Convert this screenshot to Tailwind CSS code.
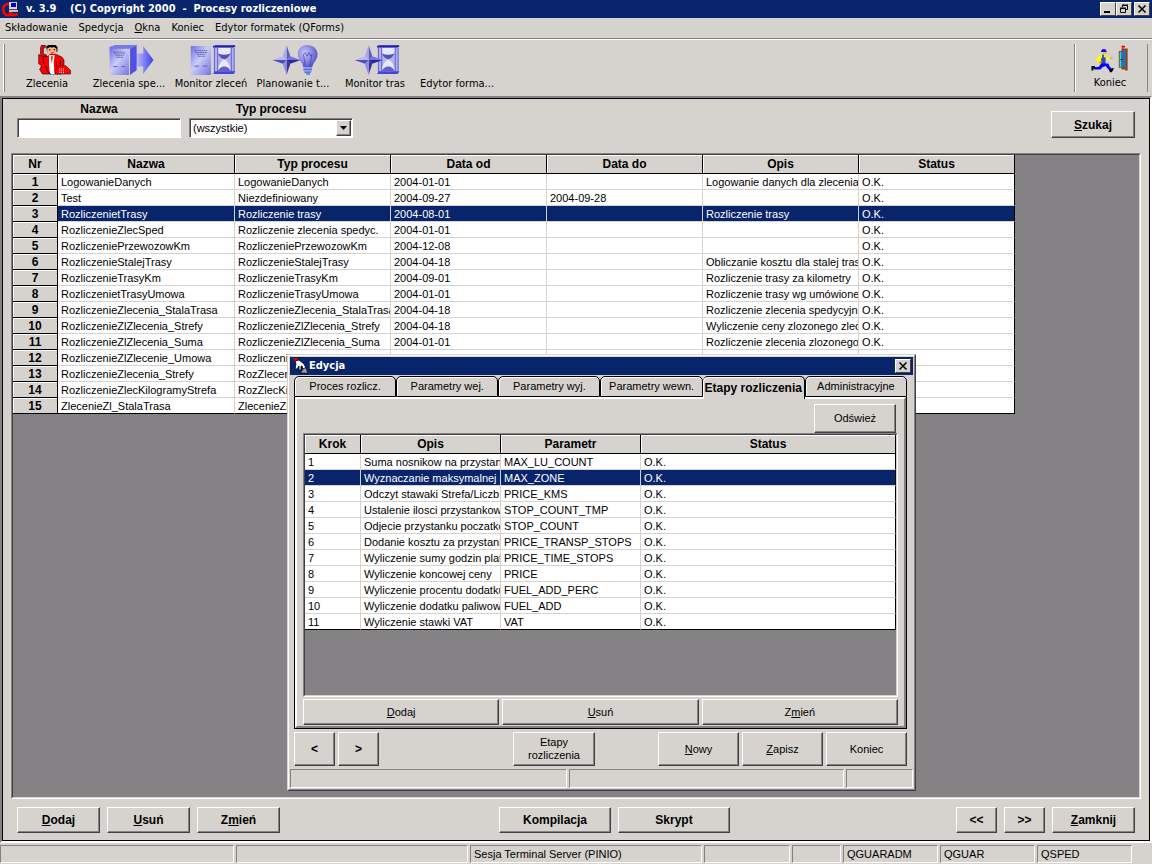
<!DOCTYPE html>
<html lang="pl">
<head>
<meta charset="utf-8">
<title>Procesy rozliczeniowe</title>
<script src="https://cdn.jsdelivr.net/npm/@tailwindcss/browser@4"></script>
</head>
<body class="relative flex min-h-screen flex-col overflow-hidden bg-[#d6d3ce] font-['Liberation_Sans',Arial,sans-serif] text-[11px] text-black">

<!-- shared drawings -->
<svg class="absolute h-0 w-0" aria-hidden="true">
  <defs>
    <linearGradient id="sheet" x1="0" y1="0" x2="1" y2="1"><stop offset="0" stop-color="#6c6ce0"/><stop offset=".45" stop-color="#ccccf8"/><stop offset="1" stop-color="#7474dc"/></linearGradient>
    <linearGradient id="arrow" x1="0" y1="0" x2="1" y2="0"><stop offset="0" stop-color="#c8c8fa"/><stop offset="1" stop-color="#3c3ce8"/></linearGradient>
    <radialGradient id="glass" cx=".35" cy=".35" r=".75"><stop offset="0" stop-color="#c8c8f8"/><stop offset=".6" stop-color="#7c7ce0"/><stop offset="1" stop-color="#4a4ab8"/></radialGradient>
    <symbol id="star" viewBox="0 0 30 32">
      <path d="M15 0l4 12-4 4z" fill="#5a5ac0"/><path d="M15 0l-4 12 4 4z" fill="#a8a8ee"/>
      <path d="M30 16l-11-4-4 4z" fill="#7474e0"/><path d="M30 16l-11 4-4-4z" fill="#28289c"/>
      <path d="M15 32l4-12-4-4z" fill="#34349c"/><path d="M15 32l-4-12 4-4z" fill="#8c8ce4"/>
      <path d="M0 16l11-4 4 4z" fill="#b8b8f4"/><path d="M0 16l11 4 4-4z" fill="#4c4cc4"/>
    </symbol>
    <symbol id="hourglass" viewBox="0 0 24 32">
      <path d="M1 3h22v26H1z" fill="#b4b4e4"/>
      <path d="M5 3h14c0 7-3 11-6 13 3 2 6 6 6 13H5c0-7 3-11 6-13-3-2-6-6-6-13z" fill="#e8e8fc"/>
      <path d="M5.500 9q6 3 13 0c-1 3-4 6-6.500 6.500C9 15 6.500 12 5.500 9z" fill="#5050bc"/>
      <path d="M12 23c4 0 6 3 7 5H5c1-2 3-5 7-5z" fill="#6060c8"/>
      <path d="M1.500 3v26M22.500 3v26M5 3v26M19.500 3v26" stroke="#5858e8" fill="none"/>
      <path d="M0 1l3-1h21l-2 3H0zM0 31h22l2-3H2z" fill="#4444d8"/><path d="M0 1.500h24" stroke="#20207c" fill="none"/>
    </symbol>
    <symbol id="sheetpage" viewBox="0 0 22 32">
      <path d="M0 1h22v31H0z" fill="url(#sheet)"/>
      <path d="M4 6h14M5 8h13M7 10h9M8 12h7" stroke="#5858b4" stroke-dasharray="2 .6" fill="none"/><path d="M4 22.500h5M13 22.500h5" stroke="#5858b4" fill="none"/>
    </symbol>
  </defs>
</svg>

<header class="flex h-[18px] items-center bg-[#08246b] px-[2px] font-['DejaVu_Sans_Condensed','DejaVu_Sans',sans-serif] text-white">
  <svg class="h-4 w-4" viewBox="0 0 16 16" aria-hidden="true">
    <path d="M7 3H5L2 5 1 8l1 4 2 2h9l3-1M7 11l5 3" fill="none" stroke="#f00" stroke-width="2.600"/>
    <path d="M7 1h8v7H7z" fill="#d6d3ce"/><path d="M9 2h5v4H9z" fill="#0000d0"/><path d="M7 9h9v2H7z" fill="#c0c0c0"/><path d="M7 8h8v1H7z" fill="#555"/>
  </svg>
  <h1 class="ml-2 flex-1 whitespace-pre text-[11px] leading-[18px] font-bold">v. 3.9    (C) Copyright 2000  -  Procesy rozliczeniowe</h1>
  <div class="flex">
    <button aria-label="Minimalizuj" class="flex h-[14px] w-4 items-center justify-center border border-white border-r-[#424142] border-b-[#424142] bg-[#d6d3ce]"><svg class="h-[10px] w-3" viewBox="0 0 12 10"><path d="M2 7h6v2H2z"/></svg></button>
    <button aria-label="Przywróć" class="mr-[2px] flex h-[14px] w-4 items-center justify-center border border-white border-r-[#424142] border-b-[#424142] bg-[#d6d3ce]"><svg class="h-[10px] w-3" viewBox="0 0 12 10"><path d="M4.500 3V1.500h5v4H8M4 1h6M2.500 4.500h5v4h-5zM2 4h6" fill="none" stroke="#000"/></svg></button>
    <button aria-label="Zamknij" class="flex h-[14px] w-4 items-center justify-center border border-white border-r-[#424142] border-b-[#424142] bg-[#d6d3ce]"><svg class="h-[10px] w-3" viewBox="0 0 12 10"><path d="M2.500 1.500l7 7M9.500 1.500l-7 7" stroke="#000" stroke-width="1.600"/></svg></button>
  </div>
</header>

<nav class="flex h-5 items-center gap-[11px] px-[5px] pt-px font-['DejaVu_Sans_Condensed','DejaVu_Sans',sans-serif] text-[11px]">
  <button>Składowanie</button><button>Spedycja</button><button><u>O</u>kna</button><button>Koniec</button><button>Edytor formatek (QForms)</button>
</nav>

<div role="toolbar" class="flex h-[58px] items-stretch border-t border-[#848284] pb-[3px] font-['DejaVu_Sans_Condensed','DejaVu_Sans',sans-serif] shadow-[inset_0_1px_0_#fff]">
  <span class="mt-[5px] mr-px ml-[3px] h-12 w-[2px] border-l border-white bg-[#848284]"></span>
  <div class="flex flex-1 [&_button]:flex [&_button]:w-[82px] [&_button]:flex-col [&_button]:items-center [&_button]:pt-[6px] [&_span]:leading-[18px] [&_span]:whitespace-nowrap [&_svg]:ml-1">
    <button>
      <svg class="h-8 w-12" viewBox="-12 0 48 32" aria-hidden="true">
        <path d="M9 1l3-1h7l2 2v5l-2 1h-9z"/><path d="M10 4l3-2 2 1 2-1 3 2v4l-3 3h-4l-3-3z" fill="#ffb088"/><path d="M12 4.500h1.500v1H12zM17 4.500h1.500v1H17z"/><path d="M14 8h3v1h-3z" fill="#f00"/>
        <path d="M4 0h4v3H6v7h3v3H5l-2-3V3z" fill="#f00" stroke="#000" stroke-width=".6"/>
        <path d="M1 10l4 2h6l2-2h7l6 3 2 3v6l-3 9H5L2 26l2-4-3-2z" fill="#f00" stroke="#000" stroke-width=".6"/>
        <path d="M12 11h6l-1 8 1 12h-5l-1-10z" fill="#fff"/><path d="M14 12h2l-1 8z" fill="#f00"/>
        <path d="M6 13v6l3 5 1 4 4 3M20 18v5M24 16v5" stroke="#000" stroke-width=".8" fill="none"/>
        <path d="M18 27l5-5h7l5 5v4H19z" fill="#f00" stroke="#000" stroke-width=".5"/><path d="M23 25.500h6M23 27.500h6M23 29.500h6" stroke="#fff" stroke-dasharray="1 1"/>
      </svg><span>Zlecenia</span></button>
    <button>
      <svg class="h-8 w-12" viewBox="0 0 48 32" aria-hidden="true">
        <path d="M28 9h9V1l11 15-11 15V23h-9z" fill="url(#arrow)"/><path d="M23 4l7-4v27l-7 5z" fill="#5050e8"/>
        <use href="#sheetpage" x="0" y="2" width="23" height="30"/><path d="M1 2l6-2h23l-6 4H1z" fill="#7878e4"/>
      </svg><span>Zlecenia spe...</span></button>
    <button>
      <svg class="h-8 w-12" viewBox="0 0 48 32" aria-hidden="true"><use href="#sheetpage" width="22" height="32"/><use href="#hourglass" x="24" width="24" height="32"/></svg>
      <span>Monitor zleceń</span></button>
    <button>
      <svg class="h-8 w-12" viewBox="0 0 48 32" aria-hidden="true"><use href="#star" width="30" height="32"/>
        <path d="M37 0c6 0 11 4 11 10 0 5-4 8-6 14h-9c-1-6-6-9-6-14C27 4 31 0 37 0z" fill="url(#glass)"/>
        <path d="M35 22l-2-12 2-2 2 4 2-4 2 4 1-2-2 12" fill="none" stroke="#4848a8" stroke-width=".8"/><path d="M33 24h9v4l-3 3h-3l-3-3z" fill="#9c9cf4"/><path d="M33 26h9M34 29h7" stroke="#5858c8"/><path d="M36 30h4v2h-4z" fill="#38a0ff"/>
      </svg><span>Planowanie t...</span></button>
    <button>
      <svg class="h-8 w-12" viewBox="0 0 48 32" aria-hidden="true"><use href="#hourglass" x="24" width="24" height="32"/><use href="#star" width="30" height="32"/></svg>
      <span>Monitor tras</span></button>
    <button><i class="block h-8"></i><span>Edytor forma...</span></button>
  </div>
  <div class="mt-[5px] mr-1 flex h-12 w-[74px] justify-center border-x border-[#848284] shadow-[inset_1px_0_0_#fff]">
    <button class="flex flex-col items-center pr-[2px]">
      <svg class="h-[34px] w-[42px]" viewBox="0 0 42 34" aria-hidden="true">
        <path d="M11 7h1V6h4v1h1v2h-6z" fill="#00f"/><path d="M13 9h4v3h-4z" fill="#ffb060"/>
        <path d="M9 12h7v3h6v2h-6v3h-5v3H8v-2H6v-5h1v-2h2z" fill="#ff0"/><path d="M21 15h3v2h-3z" fill="#f0a060"/>
        <path d="M12 12h2v3h2v8h-5v-7h1z" fill="#2848c8"/><path d="M9 20h3v2H9z" fill="#c08050"/>
        <path d="M11 22h8l2 4 3 3-3 2-5-6-3 1-3 3H3v-3h5z" fill="#00f"/><path d="M0 25h4v3H2v2H0zM20 29l5-2v2l-2 3h-2z"/>
        <path d="M31 8h3V5h7v25h-3v-1h-4v-2h-3z" fill="#8c4410"/><path d="M32 9h2v17h-2z" fill="#00e8f0"/><path d="M34 8l5-2v22l-5-3z" fill="#3468b0"/><path d="M34 4V2h4v2h-2v2h-1V4z" fill="#f00"/><path d="M33 17h2v1h-2z"/>
      </svg><span class="leading-[18px]">Koniec</span></button>
  </div>
</div>

<main class="flex flex-1 flex-col border-2 border-[#848284] border-r-white border-b-white">
  <div class="flex flex-1 flex-col border border-black px-2 pt-[3px]">
    <form class="mb-[15px] flex items-end gap-2 pr-[6px] pl-[6px]">
      <div class="flex w-[164px] flex-col gap-[2px]">
        <label for="nazwa" class="text-center text-[12px] leading-[14px] font-bold">Nazwa</label>
        <input id="nazwa" type="text" class="h-5 w-full border border-[#848284] border-r-white border-b-white bg-white px-1 shadow-[inset_1px_1px_0_#424142] outline-none">
      </div>
      <div class="flex w-[164px] flex-col gap-[2px]">
        <label for="typ" class="text-center text-[12px] leading-[14px] font-bold">Typ procesu</label>
        <div class="relative">
          <select id="typ" class="block h-5 w-full appearance-none border border-[#848284] border-r-white border-b-white bg-white pl-[3px] text-[11px] shadow-[inset_1px_1px_0_#424142] outline-none"><option>(wszystkie)</option></select>
          <span class="pointer-events-none absolute top-[2px] right-[2px] flex h-4 w-[15px] items-center justify-center border border-white border-r-[#424142] border-b-[#424142] bg-[#d6d3ce] shadow-[inset_-1px_-1px_0_#848284]"><svg class="h-1 w-[7px]" viewBox="0 0 7 4" aria-hidden="true"><path d="M0 0h7L3.500 4z"/></svg></span>
        </div>
      </div>
      <button type="button" class="ml-auto h-[27px] w-[84px] border border-white border-r-[#424142] border-b-[#424142] text-[12px] font-bold shadow-[inset_-1px_-1px_0_#848284]"><u>S</u>zukaj</button>
    </form>

    <div class="flex flex-1 flex-col border border-[#848284] border-r-white border-b-white">
      <div class="flex-1 border border-[#424142] border-r-[#d6d3ce] border-b-[#d6d3ce] bg-[#848284]">
        <table class="w-[1002px] table-fixed border-separate border-spacing-0 bg-white [&_td]:overflow-hidden [&_td]:border-r [&_td]:border-b [&_td]:border-[#d6d3ce] [&_td]:pt-px [&_td]:pl-[3px] [&_td]:leading-[14px] [&_td]:whitespace-nowrap [&_td:last-child]:border-r-black [&_th]:border-r [&_th]:border-b [&_th]:border-black [&_th]:bg-[#d6d3ce] [&_th]:px-0 [&_th]:pt-px [&_th]:text-[12px] [&_th]:font-bold [&_th]:shadow-[inset_1px_1px_0_#fff] [&_tbody_th]:leading-[14px] [&_thead_th]:leading-[17px] [&_tbody_tr:last-child_td]:border-b-black">
          <colgroup><col class="w-[45px]"><col class="w-[177px]"><col class="w-[156px]"><col class="w-[156px]"><col class="w-[156px]"><col class="w-[156px]"><col class="w-[156px]"></colgroup>
          <thead><tr><th>Nr</th><th>Nazwa</th><th>Typ procesu</th><th>Data od</th><th>Data do</th><th>Opis</th><th>Status</th></tr></thead>
          <tbody id="procesy"></tbody>
        </table>
      </div>
    </div>

    <div class="flex justify-between px-[6px] pt-2 pb-[7px] [&_button]:h-[26px] [&_button]:border [&_button]:border-white [&_button]:border-r-[#424142] [&_button]:border-b-[#424142] [&_button]:text-[12px] [&_button]:font-bold [&_button]:shadow-[inset_-1px_-1px_0_#848284]">
      <div class="flex gap-[7px]"><button class="w-[83px]"><u>D</u>odaj</button><button class="w-[83px]"><u>U</u>suń</button><button class="w-[83px]">Z<u>m</u>ień</button></div>
      <div class="mr-[7px] flex gap-[7px]"><button class="w-[112px]">Kompilacja</button><button class="w-[112px]">Skrypt</button></div>
      <div class="flex gap-[7px]"><button class="w-[41px]">&lt;&lt;</button><button class="w-[41px]">&gt;&gt;</button><button class="w-[83px]"><u>Z</u>amknij</button></div>
    </div>
  </div>
</main>

<footer class="grid h-[21px] grid-cols-[234fr_232fr_232fr_86fr_49fr_95fr_95fr_95fr] gap-[2px] pt-[2px] pr-5 pb-px [&_span]:overflow-hidden [&_span]:border [&_span]:border-[#848284] [&_span]:border-r-white [&_span]:border-b-white [&_span]:pl-[3px] [&_span]:leading-[17px] [&_span]:whitespace-nowrap">
  <span></span><span></span><span>Sesja Terminal Server (PINIO)</span><span></span><span></span><span>QGUARADM</span><span>QGUAR</span><span>QSPED</span>
</footer>

<!-- edit window -->
<section role="dialog" aria-labelledby="edycja" class="absolute top-[354px] left-[287px] w-[629px] border border-[#d6d3ce] border-r-[#424142] border-b-[#424142] bg-[#d6d3ce]">
  <div class="border border-white border-r-[#848284] border-b-[#848284] p-px">
    <div class="flex h-[18px] items-center bg-[#08246b] pr-[2px] pl-[3px] text-white">
      <svg class="h-4 w-4" viewBox="0 0 16 16" aria-hidden="true"><path d="M0 0h5v3H1z" fill="#c00"/><path d="M2 3l4-1 5 4 2 4-3 1-1-3-1 0v4H6V8L4 11H2l1-5z" fill="#fff" stroke="#000" stroke-width=".8"/><path d="M8 15c0-2 2-3 3-5h2l1 3 1 2z" fill="#a0a0a0" stroke="#000" stroke-width=".6"/></svg>
      <h2 id="edycja" class="flex-1 font-['DejaVu_Sans_Condensed','DejaVu_Sans',sans-serif] text-[11px] font-bold">Edycja</h2>
      <button aria-label="Zamknij okno" class="flex h-[14px] w-4 items-center justify-center border border-white border-r-[#424142] border-b-[#424142] bg-[#d6d3ce]"><svg class="h-[10px] w-3" viewBox="0 0 12 10"><path d="M2.500 1.500l7 7M9.500 1.500l-7 7" stroke="#000" stroke-width="1.600"/></svg></button>
    </div>

    <div class="pt-px pr-[6px] pl-1">
      <div role="tablist" class="grid h-[21px] grid-cols-6 [&_button]:overflow-hidden [&_button]:rounded-t-[5px] [&_button]:border [&_button]:border-black [&_button]:whitespace-nowrap [&_button]:shadow-[inset_1px_1px_0_#fff]">
        <button role="tab">Proces rozlicz.</button><button role="tab">Parametry wej.</button><button role="tab">Parametry wyj.</button><button role="tab">Parametry wewn.</button>
        <button role="tab" aria-selected="true" class="relative z-10 -mb-[2px] border-b-0! border-l-0! bg-[#d6d3ce] text-[12px] font-bold">Etapy rozliczenia</button>
        <button role="tab">Administracyjne</button>
      </div>
      <div class="border-x border-b border-black">
        <div class="flex flex-col border-2 border-white border-r-[#848284] border-b-[#848284] px-[6px] pt-[5px] pb-px">
          <button class="mr-[2px] h-[29px] w-[82px] self-end border border-white border-r-[#424142] border-b-[#424142] shadow-[inset_-1px_-1px_0_#848284]">Odśwież</button>
          <div class="border border-[#848284] border-r-white border-b-white">
            <div class="h-[262px] border border-[#424142] border-r-[#d6d3ce] border-b-[#d6d3ce] bg-[#848284]">
              <table class="w-full table-fixed border-separate border-spacing-0 bg-white [&_td]:overflow-hidden [&_td]:border-r [&_td]:border-b [&_td]:border-[#d6d3ce] [&_td]:pt-px [&_td]:pl-[3px] [&_td]:leading-[14px] [&_td]:whitespace-nowrap [&_td:last-child]:border-r-black [&_th]:border-r [&_th]:border-b [&_th]:border-black [&_th]:bg-[#d6d3ce] [&_th]:px-0 [&_th]:pt-px [&_th]:text-[12px] [&_th]:leading-[17px] [&_th]:font-bold [&_th]:shadow-[inset_1px_1px_0_#fff] [&_tbody_tr:last-child_td]:border-b-black">
                <colgroup><col class="w-[56px]"><col class="w-[140px]"><col class="w-[140px]"><col></colgroup>
                <thead><tr><th>Krok</th><th>Opis</th><th>Parametr</th><th>Status</th></tr></thead>
                <tbody id="etapy"></tbody>
              </table>
            </div>
          </div>
          <div class="mt-[2px] grid grid-cols-3 gap-[3px] [&_button]:h-[26px] [&_button]:border [&_button]:border-white [&_button]:border-r-[#424142] [&_button]:border-b-[#424142] [&_button]:shadow-[inset_-1px_-1px_0_#848284]">
            <button><u>D</u>odaj</button><button><u>U</u>suń</button><button>Z<u>m</u>ień</button>
          </div>
        </div>
      </div>
      <div class="flex gap-[3px] py-[3px] [&_button]:h-[34px] [&_button]:border [&_button]:border-white [&_button]:border-r-[#424142] [&_button]:border-b-[#424142] [&_button]:leading-[13px] [&_button]:shadow-[inset_-1px_-1px_0_#848284]">
        <button class="w-[41px] text-[12px] font-bold">&lt;</button><button class="w-[41px] text-[12px] font-bold">&gt;</button>
        <button class="mr-[60px] ml-auto w-[82px]">Etapy<br>rozliczenia</button>
        <button class="w-[81px]"><u>N</u>owy</button><button class="w-[81px]"><u>Z</u>apisz</button><button class="w-[81px]">Koniec</button>
      </div>
    </div>
    <div class="grid h-[19px] grid-cols-[277fr_275fr_67fr] gap-[2px] [&_span]:border [&_span]:border-[#848284] [&_span]:border-r-white [&_span]:border-b-white"><span></span><span></span><span></span></div>
  </div>
</section>

<script>
const procesy = [
  ['LogowanieDanych','LogowanieDanych','2004-01-01','','Logowanie danych dla zlecenia'],
  ['Test','Niezdefiniowany','2004-09-27','2004-09-28',''],
  ['RozliczenietTrasy','Rozliczenie trasy','2004-08-01','','Rozliczenie trasy'],
  ['RozliczenieZlecSped','Rozliczenie zlecenia spedyc.','2004-01-01','',''],
  ['RozliczeniePrzewozowKm','RozliczeniePrzewozowKm','2004-12-08','',''],
  ['RozliczenieStalejTrasy','RozliczenieStalejTrasy','2004-04-18','','Obliczanie kosztu dla stalej trasy'],
  ['RozliczenieTrasyKm','RozliczenieTrasyKm','2004-09-01','','Rozliczenie trasy za kilometry'],
  ['RozliczenietTrasyUmowa','RozliczenieTrasyUmowa','2004-01-01','','Rozliczenie trasy wg umówionej'],
  ['RozliczenieZlecenia_StalaTrasa','RozliczenieZlecenia_StalaTrasa','2004-04-18','','Rozliczenie zlecenia spedycyjne'],
  ['RozliczenieZlZlecenia_Strefy','RozliczenieZlZlecenia_Strefy','2004-04-18','','Wyliczenie ceny zlozonego zlec'],
  ['RozliczenieZlZlecenia_Suma','RozliczenieZlZlecenia_Suma','2004-01-01','','Rozliczenie zlecenia zlozonego'],
  ['RozliczenieZlZlecenie_Umowa','RozliczenieZlZlecenie_Umowa','2004-01-01','',''],
  ['RozliczenieZlecenia_Strefy','RozZlecenia_Strefy','','',''],
  ['RozliczenieZlecKilogramyStrefa','RozZlecKilogramyStrefa','','',''],
  ['ZlecenieZl_StalaTrasa','ZlecenieZl_StalaTrasa','','','']
];
const etapy = [
  ['Suma nosnikow na przystank','MAX_LU_COUNT'],['Wyznaczanie maksymalnej s','MAX_ZONE'],['Odczyt stawaki Strefa/Liczb','PRICE_KMS'],
  ['Ustalenie ilosci przystankow','STOP_COUNT_TMP'],['Odjecie przystanku poczatko','STOP_COUNT'],['Dodanie kosztu za przystank','PRICE_TRANSP_STOPS'],
  ['Wyliczenie sumy godzin platn','PRICE_TIME_STOPS'],['Wyliczenie koncowej ceny','PRICE'],['Wyliczenie procentu dodatku','FUEL_ADD_PERC'],
  ['Wyliczenie dodatku paliwow','FUEL_ADD'],['Wyliczenie stawki VAT','VAT']
];
const cells = list => list.map(t => `<td>${t}</td>`).join('');
document.getElementById('procesy').innerHTML = procesy.map((r, i) =>
  `<tr class="${i === 2 ? '[&_td]:bg-[#08246b] [&_td]:text-white' : ''}"><th>${i + 1}</th>${cells([...r, 'O.K.'])}</tr>`).join('');
document.getElementById('etapy').innerHTML = etapy.map((r, i) =>
  `<tr class="${i === 1 ? '[&_td]:bg-[#08246b] [&_td]:text-white' : ''}">${cells([i + 1, ...r, 'O.K.'])}</tr>`).join('');
</script>
</body>
</html>
